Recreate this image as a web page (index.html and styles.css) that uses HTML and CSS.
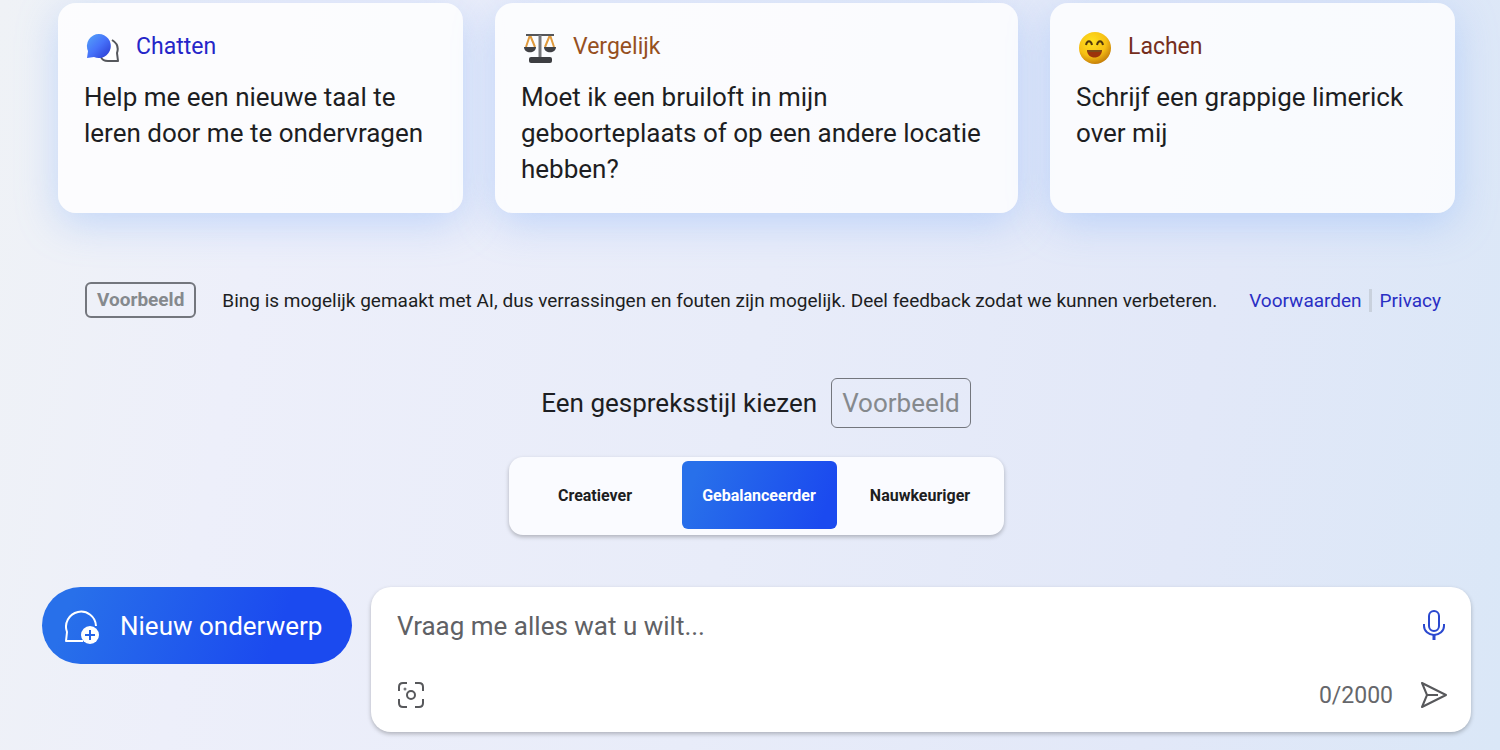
FILE: index.html
```html
<!DOCTYPE html>
<html lang="nl">
<head>
    <meta charset="UTF-8">
    <meta name="viewport" content="width=device-width, initial-scale=1.0">
    <title>Bing Chat</title>
    <link rel="stylesheet" href="styles.css">
</head>
<body>
    <main>
        <div class="cards">
            <div class="card chat">
                <h2>
                    <svg width="34" height="34" viewBox="0 0 34 34">
                        <defs>
                            <linearGradient id="bubble" x1="0" y1="0" x2="1" y2="1">
                                <stop offset="0" stop-color="#55a5f8"/>
                                <stop offset=".5" stop-color="#4672fa"/>
                                <stop offset="1" stop-color="#2a38cf"/>
                            </linearGradient>
                        </defs>
                        <path d="M26 10c5 3 7 7 5 13l1 8H22c-3 0-6-1-7-4" fill="#fff" stroke="#55575c" stroke-width="2" stroke-linejoin="round"/>
                        <path d="M13 4a12 12 0 1 1-5 23L1 28l1-7A12 12 0 0 1 13 4z" fill="url(#bubble)"/>
                    </svg>
                    <span>Chatten</span>
                </h2>
                <p>Help me een nieuwe taal te leren door me te ondervragen</p>
            </div>
            <div class="card compare">
                <h2>
                    <svg width="34" height="34" viewBox="0 0 34 34">
                        <g fill="none" stroke="#e09a3c" stroke-width="2">
                            <path d="M7 5L3 17M7 5l5 12M27 5l-5 12M27 5l4 12"/>
                        </g>
                        <path d="M3 5h28" stroke="#55565a" stroke-width="2"/>
                        <path d="M17 5v23" stroke="#77787c" stroke-width="3"/>
                        <path d="M1 17h12c0 7-12 7-12 0zM21 17h12c0 7-12 7-12 0z" fill="#404145"/>
                        <rect x="6" y="27" width="23" height="6" rx="2" fill="#3d3e42"/>
                    </svg>
                    <span>Vergelijk</span>
                </h2>
                <p>Moet ik een bruiloft in mijn geboorteplaats of op een andere locatie hebben?</p>
            </div>
            <div class="card laugh">
                <h2>
                    <svg width="34" height="34" viewBox="0 0 34 34">
                        <defs>
                            <radialGradient id="face" cx=".4" cy=".3" r=".75">
                                <stop offset="0" stop-color="#ffe11f"/>
                                <stop offset=".6" stop-color="#f6bf14"/>
                                <stop offset="1" stop-color="#bf7608"/>
                            </radialGradient>
                        </defs>
                        <circle cx="17" cy="18" r="16" fill="url(#face)"/>
                        <path d="M8 15c1-5 5-5 6 0M19 15c1-5 5-5 6 0" fill="none" stroke="#51370c" stroke-width="2"/>
                        <path d="M9 20h15c0 10-15 10-15 0z" fill="#9c330b"/>
                        <path d="M9 20h15l-1 2H10z" fill="#7a4a1a"/>
                    </svg>
                    <span>Lachen</span>
                </h2>
                <p>Schrijf een grappige limerick over mij</p>
            </div>
        </div>

        <div class="notice">
            <span class="tag">Voorbeeld</span>
            <p>Bing is mogelijk gemaakt met AI, dus verrassingen en fouten zijn mogelijk. Deel feedback zodat we kunnen verbeteren.</p>
            <a href="#">Voorwaarden</a>
            <a href="#" class="privacy">Privacy</a>
        </div>

        <div class="style">
            <div class="style-title">
                <span>Een gespreksstijl kiezen</span>
                <span class="tag big">Voorbeeld</span>
            </div>
            <div class="tones">
                <button type="button">Creatiever</button>
                <button type="button" class="active">Gebalanceerder</button>
                <button type="button">Nauwkeuriger</button>
            </div>
        </div>

        <form class="bottom">
            <button type="button" class="new-topic">
                <svg width="36" height="36" viewBox="0 0 36 36">
                    <path d="M19 33H2l1-9a15 15 0 1 1 29-6" fill="none" stroke="#fff" stroke-width="2" stroke-linejoin="round"/>
                    <circle cx="26" cy="27" r="9" fill="#fff"/>
                    <path d="M26 22v10M21 27h10" stroke="#2463e8" stroke-width="2"/>
                </svg>
                <span>Nieuw onderwerp</span>
            </button>
            <div class="ask">
                <div class="line">
                    <input type="text" placeholder="Vraag me alles wat u wilt..." aria-label="Vraag me alles wat u wilt">
                    <button type="button" aria-label="Microfoon">
                        <svg width="28" height="32" viewBox="0 0 28 32">
                            <g fill="none" stroke="#2a48cf" stroke-width="2">
                                <rect x="9" y="1" width="10" height="20" rx="5"/>
                                <path d="M4 14v2a10 9 0 0 0 20 0v-2"/>
                                <path d="M14 25v5" stroke-width="3"/>
                            </g>
                        </svg>
                    </button>
                </div>
                <div class="line">
                    <button type="button" aria-label="Afbeelding toevoegen">
                        <svg width="28" height="28" viewBox="0 0 28 28">
                            <g fill="none" stroke="#57585b" stroke-width="2">
                                <path d="M2 10V6q0-4 4-4h4M18 2h4q4 0 4 4v4M26 18v4q0 4-4 4h-4M10 26H6q-4 0-4-4v-4"/>
                                <circle cx="14" cy="14" r="4"/>
                            </g>
                            <circle cx="8" cy="8" r="1.500" fill="#77787c"/>
                        </svg>
                    </button>
                    <span class="count">0/2000</span>
                    <button type="submit" aria-label="Verzenden">
                        <svg width="28" height="28" viewBox="0 0 28 28">
                            <path d="M2 2l24 12L2 26l5-12zM7 14h11" fill="none" stroke="#57585b" stroke-width="2" stroke-linejoin="round"/>
                        </svg>
                    </button>
                </div>
            </div>
        </form>
    </main>
</body>
</html>
```
FILE: styles.css
```css
*{
    margin: 0;
    padding: 0;
    box-sizing: border-box;
}
body{
    min-height: 100vh;
    background: linear-gradient(100deg, #eff2f6 0%, #edeffa 18%, #e8ecf9 50%, #e2e8f8 78%, #dae7f7 100%);
    font-family: Roboto, "Liberation Sans", sans-serif;
    color: #1d1e22;
}
main{
    padding-top: 3px;
}
button{
    border: none;
    background: none;
    font-family: inherit;
    cursor: pointer;
}
a{
    color: #2a2fc4;
    text-decoration: none;
}
svg{
    display: block;
    flex: none;
}

/* suggestions */
.cards{
    display: grid;
    grid-template-columns: 405fr 523fr 405fr;
    gap: 32px;
    margin: 0 45px 0 58px;
}
.card{
    padding: 26px;
    border-radius: 18px;
    background: rgba(255, 255, 255, 0.8);
    box-shadow: 0 10px 40px rgba(120, 170, 250, 0.38);
    font-size: 26px;
    line-height: 36px;
}
.card h2{
    display: flex;
    align-items: center;
    gap: 16px;
    height: 36px;
    margin: 0 0 14px 2px;
    font-size: 23px;
    font-weight: 400;
}
.chat h2{
    color: #2525c8;
}
.compare h2{
    color: #96501f;
}
.laugh h2{
    color: #752e1d;
}

/* notice */
.notice{
    display: flex;
    align-items: center;
    margin: 69px 59px 0 85px;
    font-size: 19px;
    white-space: nowrap;
}
.notice p{
    margin: 0 auto 0 26px;
}
.tag{
    border: 2px solid #73767d;
    border-radius: 6px;
    padding: 0 10px;
    line-height: 32px;
    font-weight: 700;
    color: #85898d;
}
.privacy{
    margin-left: 7px;
    padding-left: 8px;
    border-left: 3px solid #c9d1dd;
}

/* conversation style */
.style{
    display: flex;
    flex-direction: column;
    align-items: center;
    gap: 29px;
    padding: 60px 0 0 12px;
}
.style-title{
    display: flex;
    align-items: center;
    gap: 14px;
    font-size: 26px;
}
.big{
    border-width: 1px;
    line-height: 48px;
    font-weight: 400;
}
.tones{
    display: grid;
    grid-template-columns: 165px 155px 159px;
    gap: 4px;
    padding: 4px 4px 6px;
    border-radius: 14px;
    background: #fafbff;
    box-shadow: 0 2px 4px rgba(0, 0, 0, 0.25);
}
.tones button{
    height: 68px;
    border-radius: 6px;
    font-size: 16px;
    font-weight: 700;
    color: #1d1e22;
}
.tones .active{
    background: linear-gradient(110deg, #2870ea 10%, #1b4aef 90%);
    color: #fff;
}

/* bottom bar */
.bottom{
    display: flex;
    align-items: flex-start;
    gap: 19px;
    margin: 52px 29px 0 42px;
}
.new-topic{
    display: flex;
    align-items: center;
    gap: 20px;
    width: 310px;
    height: 77px;
    padding-left: 22px;
    border-radius: 39px;
    background: linear-gradient(110deg, #2870ea 10%, #1b4aef 75%);
    font-size: 26px;
    color: #fff;
    white-space: nowrap;
}
.ask{
    flex: 1;
    padding: 20px 23px 18px 26px;
    border-radius: 20px;
    background: #fff;
    box-shadow: 0 2px 4px rgba(0, 0, 0, 0.25);
}
.line{
    display: flex;
    align-items: center;
    height: 38px;
}
.line + .line{
    margin-top: 31px;
}
.ask input{
    flex: 1;
    height: 38px;
    border: none;
    outline: none;
    background: none;
    font-family: inherit;
    font-size: 26px;
}
.ask input::placeholder{
    color: #606165;
}
.count{
    margin: 0 27px 0 auto;
    font-size: 23px;
    color: #66676b;
}
```
